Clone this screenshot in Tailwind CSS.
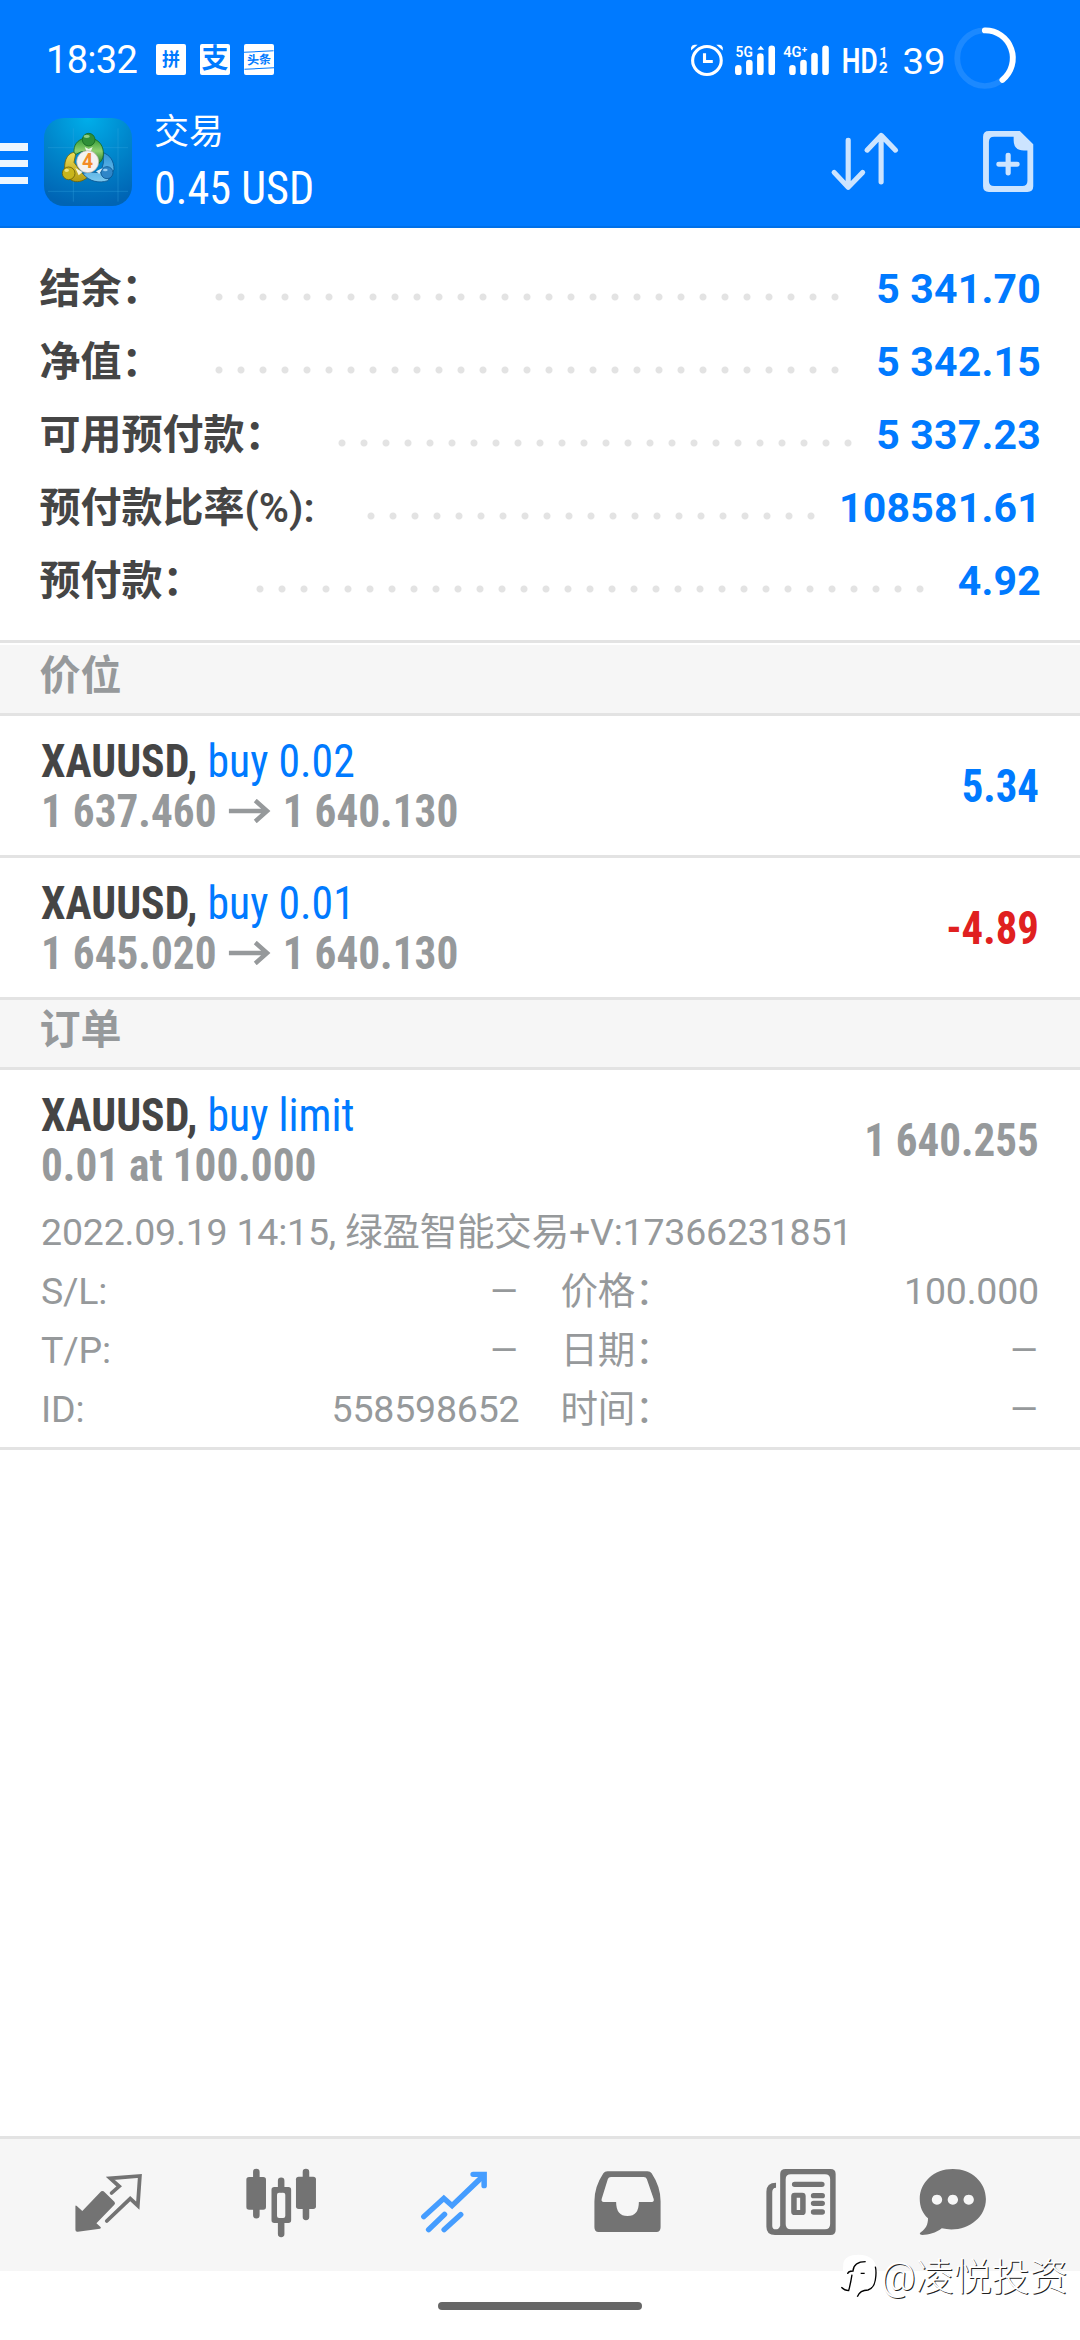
<!DOCTYPE html>
<html lang="zh-CN">
<head>
  <meta charset="UTF-8" />
  <meta name="viewport" content="width=device-width, initial-scale=1.0"/>
  <title>交易</title>
  <script src="https://cdn.jsdelivr.net/npm/@tailwindcss/browser@4"></script>
</head>
<body class="relative w-[1080px] h-[2340px] overflow-hidden flex flex-col bg-white text-[#454545] font-['Roboto','Noto_Sans_CJK_SC',sans-serif]">

  <!-- Header -->
  <header class="h-[228px] shrink-0 bg-[#007aff] border-b-2 border-[#0070e8] text-white">

    <!-- Status bar -->
    <div class="flex h-[112px] items-center justify-between pl-[46px] pr-[60px]">
      <div class="flex items-center mt-[7px]">
        <span class="w-[110px] text-[38px] leading-none tracking-[-0.7px]">18:32</span>
        <div class="flex gap-[14px] text-[#007aff] font-bold">
          <span class="flex w-[30px] h-[31px] items-center justify-center rounded-[2px] bg-white text-[18px] leading-none">拼</span>
          <span class="flex w-[30px] h-[31px] items-center justify-center rounded-[2px] bg-white text-[27px] leading-none">支</span>
          <span class="flex w-[30px] h-[31px] items-center justify-center overflow-hidden rounded-[2px] bg-white">
            <span class="w-[30px] shrink-0 border-y-[1.5px] border-[#007aff] text-center text-[12px] leading-[16px] -rotate-3">头条</span>
          </span>
        </div>
      </div>
      <svg class="w-[331px] h-[67px] mt-[2px]" viewBox="430 70 960 200" preserveAspectRatio="none" fill="#fff">
        <!-- alarm -->
        <circle cx="482" cy="179" r="41.500" fill="none" stroke="#fff" stroke-width="9"/>
        <path d="M475 157v25h24" fill="none" stroke="#fff" stroke-width="9"/>
        <path d="M436 149v-9q2-8 10-8h9zM528 149v-9q-2-8-10-8h-9z"/>
        <!-- signal -->
        <text x="565" y="168" font-size="44" font-weight="600" textLength="50" lengthAdjust="spacingAndGlyphs">5G</text>
        <g stroke="#fff" stroke-width="19" stroke-linecap="round">
          <path d="M573 202v11M605 186v27M637 167v46M670 144v69"/>
          <path d="M730 202v11M762 186v27M794 165v48M826 144v69"/>
        </g>
        <path d="M628 147l10-12 10 12z"/>
        <text x="703" y="168" font-size="44" font-weight="600" textLength="70" lengthAdjust="spacingAndGlyphs">4G⁺</text>
        <!-- HD -->
        <text x="873" y="216" font-size="106" font-weight="600" textLength="104" lengthAdjust="spacingAndGlyphs">HD</text>
        <text x="982" y="172" font-size="46" font-weight="700" textLength="24" lengthAdjust="spacingAndGlyphs">1</text>
        <text x="981" y="216" font-size="46" font-weight="700" textLength="25" lengthAdjust="spacingAndGlyphs">2</text>
        <text x="1049" y="219" font-size="112" textLength="125" lengthAdjust="spacingAndGlyphs">39</text>
        <!-- battery ring -->
        <ellipse cx="1288" cy="172" rx="80" ry="83" fill="none" stroke="#1c89ff" stroke-width="17"/>
        <path d="M1288 89a80 83 0 0 1 51 148" fill="none" stroke="#fff" stroke-width="17" stroke-linecap="round"/>
      </svg>
    </div>

    <!-- Title bar -->
    <div class="flex h-[104px] items-start">
      <svg class="w-[28px] h-[41px] mt-[31px]" viewBox="0 0 28 41" fill="#fff" fill-opacity=".93">
        <path d="M0 0h28v8H0zM0 17h28v7H0zM0 34h28v7H0z"/>
      </svg>
      <svg class="w-[88px] h-[88px] ml-4 mt-[6px]" viewBox="12 24 264 264">
        <defs>
          <radialGradient id="bg" cx=".5" cy="0" r="1"><stop offset="0" stop-color="#00aeea"/><stop offset=".5" stop-color="#0087cc"/><stop offset="1" stop-color="#0064b4"/></radialGradient>
          <linearGradient id="green" x2="0" y2="1"><stop stop-color="#2f9a35"/><stop offset=".5" stop-color="#8fd070"/><stop offset="1" stop-color="#1e7d2a"/></linearGradient>
          <linearGradient id="gold" x2="0" y2="1"><stop stop-color="#f0e05a"/><stop offset="1" stop-color="#b39a10"/></linearGradient>
          <linearGradient id="sky" x2="0" y2="1"><stop stop-color="#2f95d8"/><stop offset="1" stop-color="#7cc8ee"/></linearGradient>
        </defs>
        <rect x="12" y="24" width="264" height="264" rx="60" fill="url(#bg)"/>
        <path d="M100 55v220M234 55v220M24 113h240M24 244h240" stroke="#35a8e0" stroke-opacity=".5" stroke-width="2"/>
        <g stroke-width="2.500">
          <path d="M108 127c-22-2-36 20-34 50l20 34c16 8 34 4 50-10l-20-14-22-30z" fill="url(#gold)" stroke="#6d6208"/>
          <path d="M190 128c20 8 32 24 32 50l-18 34c-26 8-56 4-76-22l20-4 34 2 8-28z" fill="url(#sky)" stroke="#0b5590"/>
          <path d="M102 128c-2-22 10-38 30-43h24c22 5 36 24 34 50-2 12-6 20-14 26l-10-28-20-10-22 2-16 8z" fill="url(#green)" stroke="#176a20"/>
          <circle cx="146" cy="89" r="19" fill="#2f8f38" stroke="#176a20"/>
          <circle cx="86" cy="190" r="19" fill="#c9b51c" stroke="#6d6208"/>
          <circle cx="201" cy="188" r="18" fill="#2f86c8" stroke="#0b5590"/>
        </g>
        <path d="M134 111l12 6 12-6-6 14h-12zM106 174l10 22 12-10zM188 174l-10 18-10-8z" fill="#fff" fill-opacity=".85"/>
        <ellipse cx="140" cy="79" rx="9" ry="5" fill="#b5e8a8" fill-opacity=".7"/>
        <ellipse cx="80" cy="181" rx="7" ry="5" fill="#fff6a8" fill-opacity=".7"/>
        <ellipse cx="196" cy="180" rx="7" ry="4" fill="#c4e8ff" fill-opacity=".7"/>
        <circle cx="143" cy="155" r="33" fill="#f4f2f0" stroke="#b9b0a8" stroke-width="2"/>
        <text x="143" y="175" text-anchor="middle" font-size="58" font-weight="700" fill="#f28c28">4</text>
      </svg>
      <div class="ml-[22px] mt-px w-[651px]">
        <div class="text-[35px] leading-[40px]">交易</div>
        <div class="origin-left scale-x-[.94] text-[47px] leading-[56px] mt-[7px] font-stretch-condensed">0.45 USD</div>
      </div>
      <svg class="w-[72px] h-[63px] mt-[18px] ml-[24px]" viewBox="840 390 210 190" preserveAspectRatio="none" fill="none" stroke="#cce4ff" stroke-width="15" stroke-linecap="round" stroke-linejoin="round">
        <path d="M896 421v141M855 518l41 45 42-45M992 547V407M951 451l41-45 42 45"/>
      </svg>
      <svg class="w-[55px] h-[65px] mt-[17px] ml-[80px]" viewBox="1280 388 160 196" preserveAspectRatio="none" fill="#cce4ff">
        <path fill-rule="evenodd" d="M1303 394h90l39 40v127q0 17-17 17h-112q-17 0-17-17V411q0-17 17-17zM1318 411q-15 0-15 16v118q0 15 15 15h82q15 0 15-15v-92h-10q-30 0-30-30v-12z"/>
        <path d="M1332 494h53M1359 467v54" stroke="#cce4ff" stroke-width="15" stroke-linecap="round"/>
      </svg>
    </div>
  </header>

  <!-- Account summary -->
  <section class="h-[412px] shrink-0 pt-[25px] pl-[39.5px] pr-[39px] text-[41px] leading-[73px] font-bold">
    <div class="flex h-[73px]">
      <span>结余：</span>
      <i class="ml-[45px] mt-[33px] w-[638px] h-[22px] bg-[radial-gradient(circle,#e3e3e3_3px,transparent_4px)] bg-[length:22px_22px]"></i>
      <span class="ml-auto tracking-[0.2px] text-[#007aff]">5 341.70</span>
    </div>
    <div class="flex h-[73px]">
      <span>净值：</span>
      <i class="ml-[45px] mt-[33px] w-[638px] h-[22px] bg-[radial-gradient(circle,#e3e3e3_3px,transparent_4px)] bg-[length:22px_22px]"></i>
      <span class="ml-auto tracking-[0.2px] text-[#007aff]">5 342.15</span>
    </div>
    <div class="flex h-[73px]">
      <span>可用预付款：</span>
      <i class="ml-[45px] mt-[33px] w-[528px] h-[22px] bg-[radial-gradient(circle,#e3e3e3_3px,transparent_4px)] bg-[length:22px_22px]"></i>
      <span class="ml-auto tracking-[0.2px] text-[#007aff]">5 337.23</span>
    </div>
    <div class="flex h-[73px]">
      <span class="w-[275px] whitespace-nowrap">预付款比率<span class="font-semibold">(%):</span></span>
      <i class="ml-[45px] mt-[33px] w-[462px] h-[22px] bg-[radial-gradient(circle,#e3e3e3_3px,transparent_4px)] bg-[length:22px_22px]"></i>
      <span class="ml-auto tracking-[0.2px] text-[#007aff]">108581.61</span>
    </div>
    <div class="flex h-[73px]">
      <span>预付款：</span>
      <i class="ml-[45px] mt-[33px] w-[682px] h-[22px] bg-[radial-gradient(circle,#e3e3e3_3px,transparent_4px)] bg-[length:22px_22px]"></i>
      <span class="ml-auto tracking-[0.2px] text-[#007aff]">4.92</span>
    </div>
  </section>

  <!-- Positions -->
  <div class="h-[5px] shrink-0 border-t-3 border-[#e3e3e3]"></div>
  <h2 class="h-[71px] shrink-0 border-b-3 border-[#e3e3e3] bg-[#f6f6f6] pl-[39.5px] text-[41px] leading-[62px] font-bold text-[#96999b]">价位</h2>

  <div class="flex h-[142px] shrink-0 items-center justify-between border-b-3 border-[#e3e3e3] pl-[41px] pr-[41px] text-[47px] leading-[50px] font-bold font-stretch-condensed">
    <div>
      <div class="origin-left scale-x-[.93]">XAUUSD, <span class="font-normal text-[#007aff]">buy 0.02</span></div>
      <div class="flex origin-left scale-x-[.92] items-center text-[#96999b]">1 637.460
        <svg class="mx-[13px] w-[46px] h-[24px]" viewBox="0 0 43 24" preserveAspectRatio="none" fill="none" stroke="#96999b" stroke-width="4.500"><path d="M0 12h40M27 1.500L39 12 27 22.500"/></svg>1 640.130</div>
    </div>
    <div class="origin-right scale-x-[.91] text-[#007aff]">5.34</div>
  </div>

  <div class="flex h-[142px] shrink-0 items-center justify-between border-b-3 border-[#e3e3e3] pl-[41px] pr-[41px] text-[47px] leading-[50px] font-bold font-stretch-condensed">
    <div>
      <div class="origin-left scale-x-[.93]">XAUUSD, <span class="font-normal text-[#007aff]">buy 0.01</span></div>
      <div class="flex origin-left scale-x-[.92] items-center text-[#96999b]">1 645.020
        <svg class="mx-[13px] w-[46px] h-[24px]" viewBox="0 0 43 24" preserveAspectRatio="none" fill="none" stroke="#96999b" stroke-width="4.500"><path d="M0 12h40M27 1.500L39 12 27 22.500"/></svg>1 640.130</div>
    </div>
    <div class="origin-right scale-x-[.91] text-[#e02020]">-4.89</div>
  </div>

  <!-- Orders -->
  <h2 class="h-[70px] shrink-0 border-b-3 border-[#e3e3e3] bg-[#f6f6f6] pl-[39.5px] text-[41px] leading-[60px] font-bold text-[#96999b]">订单</h2>

  <div class="h-[380px] shrink-0 border-b-3 border-[#e3e3e3] pl-[41px] pr-[41px] text-[#96999b]">
    <div class="flex h-[139px] items-center justify-between text-[47px] leading-[50px] font-bold font-stretch-condensed">
      <div>
        <div class="origin-left scale-x-[.93] text-[#454545]">XAUUSD, <span class="font-normal text-[#007aff]">buy limit</span></div>
        <div class="origin-left scale-x-[.92]">0.01 at 100.000</div>
      </div>
      <div class="origin-right scale-x-[.915]">1 640.255</div>
    </div>
    <div class="text-[37.5px] leading-[59px] tracking-[-0.2px]">
      <div class="h-[59px] -mt-[6px] whitespace-nowrap">2022.09.19 14:15, 绿盈智能交易+V:17366231851</div>
      <div class="grid grid-cols-2 gap-x-[41px]">
        <div class="flex justify-between"><span>S/L:</span><span class="origin-right scale-x-125">–</span></div>
        <div class="flex justify-between"><span>价格：</span><span>100.000</span></div>
        <div class="flex justify-between"><span>T/P:</span><span class="origin-right scale-x-125">–</span></div>
        <div class="flex justify-between"><span>日期：</span><span class="origin-right scale-x-125">–</span></div>
        <div class="flex justify-between"><span>ID:</span><span>558598652</span></div>
        <div class="flex justify-between"><span>时间：</span><span class="origin-right scale-x-125">–</span></div>
      </div>
    </div>
  </div>

  <!-- Bottom navigation -->
  <nav class="mt-auto flex h-[135px] shrink-0 border-t-3 border-[#e3e3e3] bg-[#f6f6f6] pl-[22px]">
    <svg class="w-[173px] h-[132px]" viewBox="64 57 502 396" preserveAspectRatio="none" fill="#737373">
      <path d="M297 213q4 0 7 4l28 28q4 5 0 9l-52 56 12 11q3 4-2 5l-64 9q-7 1-7-6v-70q0-4 4-1l16 15 52-56q3-4 6-4z"/>
      <path d="M324 219l22-20-26-24 86-7-6 89-22-21-68 67" fill="none" stroke="#737373" stroke-width="11" stroke-linecap="round"/>
    </svg>
    <svg class="w-[173px] h-[132px]" viewBox="566 57 502 396" preserveAspectRatio="none" fill="#737373">
      <path d="M744 156v130M888 156v135M816 182v25M816 305v37" stroke="#737373" stroke-width="19" stroke-linecap="round"/>
      <rect x="715" y="171" width="57" height="98" rx="8"/>
      <rect x="859" y="170" width="58" height="97" rx="8"/>
      <path fill-rule="evenodd" d="M796 201h41q8 0 8 8v92q0 8-8 8h-41q-8 0-8-8v-92q0-8 8-8zM810 218q-6 0-6 6v64q0 6 6 6h12q6 0 6-6v-64q0-6-6-6z"/>
    </svg>
    <svg class="w-[173px] h-[132px]" viewBox="1069 57 502 396" preserveAspectRatio="none" fill="none" stroke="#459dff" stroke-width="16" stroke-linecap="round">
      <path d="M1231 290l58-55 24 22 87-86"/>
      <path d="M1374 163h32v34M1245 329l46-46M1290 329l48-45"/>
    </svg>
    <svg class="w-[173px] h-[132px]" viewBox="3 57 502 396" preserveAspectRatio="none" fill="#737373">
      <path fill-rule="evenodd" d="M196 154h116q8 0 12 6 26 40 26 84v78q0 14-12 14H170q-12 0-12-14v-78q0-44 26-84 4-6 12-6zM206 171q-7 0-9 6l-18 60q-2 8 6 9h36q0 42 33 42t33-42h38q7-1 5-9l-20-60q-2-6-9-6z"/>
    </svg>
    <svg class="w-[173px] h-[132px]" viewBox="505 57 502 396" preserveAspectRatio="none" fill="#737373">
      <path fill-rule="evenodd" d="M713 147h130q15 0 15 15v168q0 15-15 15H682q-25 0-25-25v-105q0-27 28-27v15q-11 0-11 14v100q0 11 10 11t13-11V162q0-15 16-15zM728 163q-15 0-15 15v134q0 16 15 16h99q15 0 15-16V178q0-15-15-15z"/>
      <path d="M739 193h79M794 227h25M794 250h25M794 276h25" stroke="#737373" stroke-width="16" stroke-linecap="round"/>
      <path fill-rule="evenodd" d="M739 218h22q10 0 10 10v47q0 10-10 10h-22q-10 0-10-10v-47q0-10 10-10zM745 233v37h10v-37z"/>
    </svg>
    <svg class="w-[173px] h-[132px]" viewBox="1008 57 502 396" preserveAspectRatio="none" fill="#737373">
      <path fill-rule="evenodd" d="M1199 147c55 0 96 40 96 90 0 62-64 104-128 88-18 14-38 20-57 20q-12-2-3-9c14-10 20-22 20-41-16-15-24-35-24-58 0-50 41-90 96-90zM1153 224a15 15 0 1 0 .1 0zM1199 224a15 15 0 1 0 .1 0zM1245 224a15 15 0 1 0 .1 0z"/>
    </svg>
  </nav>

  <!-- Home indicator -->
  <div class="flex h-[69px] shrink-0 justify-center pt-[31px]">
    <div class="w-[204px] h-[8px] rounded-full bg-[#666]"></div>
  </div>

  <!-- Watermark -->
  <div class="absolute left-[840px] top-[2252px] flex items-center text-white">
    <svg class="w-[41px] h-[50px]" viewBox="30 40 123 150" fill="none">
      <path d="M40 74q4-26 46-26 50 2 52 40v40q-2 26-32 30l-24 18-10-16-36-16z" fill="#fff"/>
      <path d="M34 146q10 10 22 10 6-22 10-48M53 106q0-8 16-9 2-28 38-28M92 104h12M136 84q4 16 0 40-4 24-22 30-24 0-32 20" stroke="#000" stroke-width="4"/>
    </svg>
    <span class="text-[38px] leading-[50px] font-light whitespace-nowrap [text-shadow:1px_1px_0_#222]">@凌悦投资</span>
  </div>

</body>
</html>
